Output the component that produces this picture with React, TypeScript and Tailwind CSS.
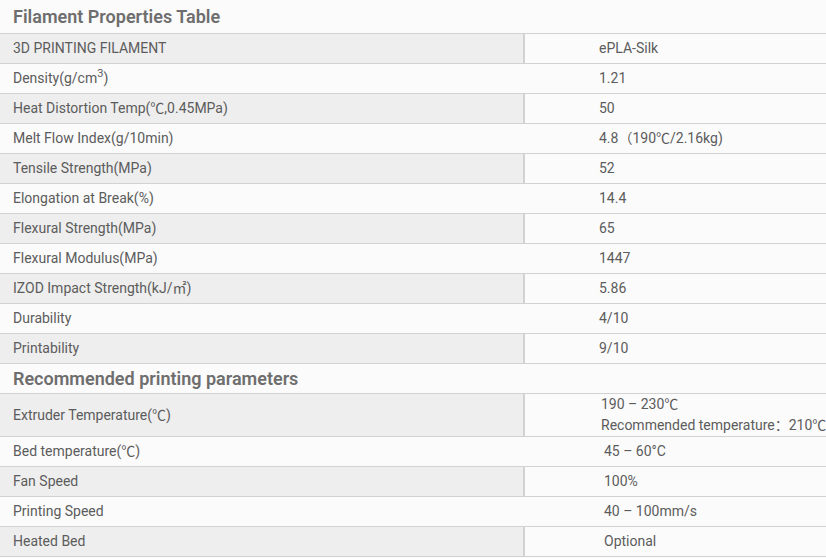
import React from 'react';

type Row = {
  label: React.ReactNode;
  value: React.ReactNode;
  pad?: string;
  tall?: boolean;
};

const properties: Row[] = [
  { label: '3D PRINTING FILAMENT', value: 'ePLA-Silk' },
  {
    label: (
      <>
        Density(g/cm<sup className="text-[11px] relative -top-[5px]">3</sup>)
      </>
    ),
    value: '1.21',
  },
  { label: 'Heat Distortion Temp(℃,0.45MPa)', value: '50' },
  { label: 'Melt Flow Index(g/10min)', value: '4.8（190℃/2.16kg)' },
  { label: 'Tensile Strength(MPa)', value: '52' },
  { label: 'Elongation at Break(%)', value: '14.4' },
  { label: 'Flexural Strength(MPa)', value: '65' },
  { label: 'Flexural Modulus(MPa)', value: '1447' },
  { label: 'IZOD Impact Strength(kJ/㎡)', value: '5.86' },
  { label: 'Durability', value: '4/10' },
  { label: 'Printability', value: '9/10' },
];

const params: Row[] = [
  {
    label: 'Extruder Temperature(℃)',
    value: (
      <div className="flex flex-col leading-[21px]">
        <span>190 – 230℃</span>
        <span className="whitespace-nowrap">Recommended temperature：210℃</span>
      </div>
    ),
    pad: 'pl-[76px]',
    tall: true,
  },
  { label: 'Bed temperature(℃)', value: '45 – 60°C', pad: 'pl-[79px]' },
  { label: 'Fan Speed', value: '100%', pad: 'pl-[79px]' },
  { label: 'Printing Speed', value: '40 – 100mm/s', pad: 'pl-[79px]' },
  { label: 'Heated Bed', value: 'Optional', pad: 'pl-[79px]' },
];

function Title({ children, first }: { children: React.ReactNode; first?: boolean }) {
  return (
    <div
      className={`flex items-center pl-[13px] text-[18px] font-semibold text-[#6e6e6e] border-b border-[#d2d2d2] ${
        first ? 'h-[34px] pb-[1px]' : 'h-[30px]'
      }`}
    >
      {children}
    </div>
  );
}

function TableRow({ row, shaded }: { row: Row; shaded: boolean }) {
  return (
    <div className={`flex border-b border-[#d2d2d2] ${row.tall ? 'h-[43px]' : 'h-[30px]'}`}>
      <div
        className={`w-[525px] shrink-0 flex items-center pl-[13px] ${
          shaded ? 'bg-[#eeeeee] border-r-2 border-[#d2d2d2]' : ''
        }`}
      >
        {row.label}
      </div>
      <div className={`flex-1 flex items-center overflow-hidden ${row.pad ?? 'pl-[74px]'}`}>
        {row.value}
      </div>
    </div>
  );
}

export default function App() {
  return (
    <div
      className="w-[826px] h-[558px] overflow-hidden bg-[#fbfbfb] text-[14px] text-[#5c5c5c]"
      style={{ fontFamily: 'Roboto, "Noto Sans CJK SC", "Liberation Sans", sans-serif' }}
    >
      {/* Filament properties */}
      <Title first>Filament Properties Table</Title>
      {properties.map((row, i) => (
        <TableRow key={i} row={row} shaded={i % 2 === 0} />
      ))}

      {/* Printing parameters */}
      <Title>Recommended printing parameters</Title>
      {params.map((row, i) => (
        <TableRow key={i} row={row} shaded={i % 2 === 0} />
      ))}
    </div>
  );
}
